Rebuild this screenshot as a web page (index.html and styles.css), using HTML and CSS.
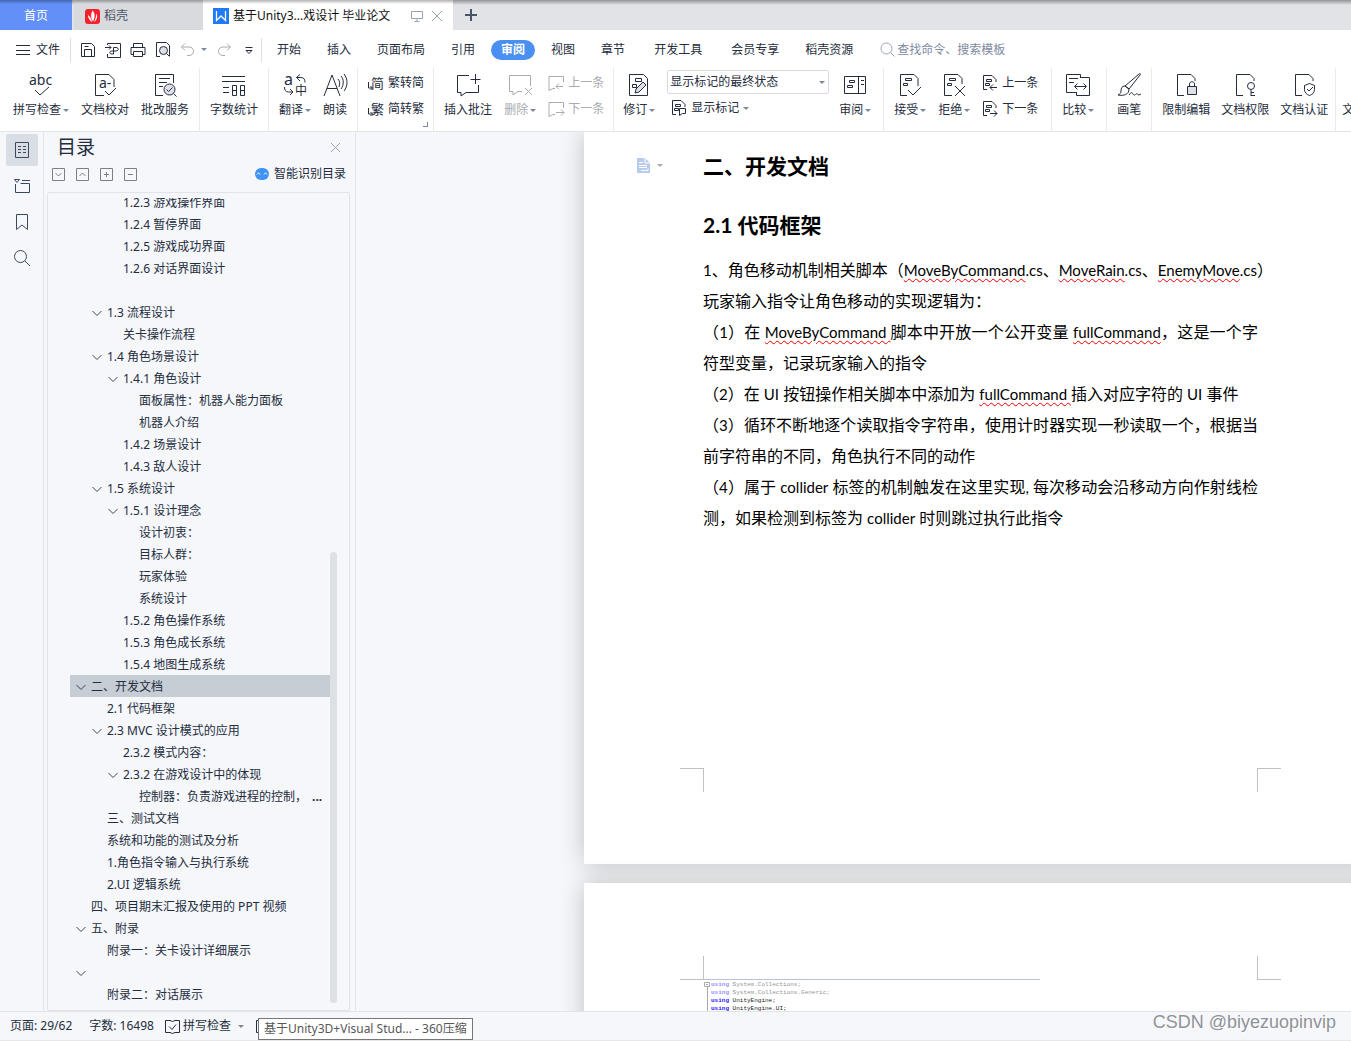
FILE: index.html
```
<!DOCTYPE html>
<html lang="zh-CN">
<head>
<meta charset="utf-8">
<title>基于Unity3D游戏设计 毕业论文</title>
<link rel="stylesheet" href="styles.css">
</head>
<body>
<svg class="symbols" aria-hidden="true">
  <symbol id="chev" viewBox="0 0 10 10"><path d="M.5 3L5 7.500 9.500 3"/></symbol>
  <symbol id="note" viewBox="0 0 16 16"><path d="M7 13.500H5l-4 2V1.500H15.500V7"/></symbol>
  <symbol id="track" viewBox="0 0 16 16"><path d="M5 14.500H1.500V.5H10l4 4V7M4.500 4.500h5v2h-5zM3.500 8.500h4v2h-4z"/></symbol>
  <symbol id="page" viewBox="0 0 24 24"><path d="M10 22.500H3.500V1.500H17l4 4V8"/></symbol>
</svg>

<header>
  <nav class="tabs">
    <button class="tab home">首页</button>
    <button class="tab docer"><svg width="15" height="15" viewBox="0 0 15 15"><rect width="15" height="15" rx="3" fill="#f5222d"/><path d="M7.500 1.500c2.500 2.500 3 6 .5 11C5.500 9 5.500 5 7.500 1.500zM11.500 4.500c1.500 3 .5 6.500-2.500 8.500 1.500-3 2-5.500 2.500-8.500zM3 6c0 3 1.500 5.500 4 7C6.500 9.500 5 7.500 3 6z" fill="#fff"/></svg>稻壳</button>
    <button class="tab current"><svg width="16" height="16" viewBox="0 0 16 16"><rect width="16" height="16" fill="#1f7bf2"/><path d="M3.500 3v9.500L8 8l4.500 4.500V3" fill="none" stroke="#fff" stroke-width="1.300"/></svg><span class="tab-title">基于Unity3...戏设计 毕业论文</span><svg class="ico faint" width="12" height="12" viewBox="0 0 12 12"><path d="M.5 1.500h11v7H.5zM6 8.500v3M3.500 11.500h5"/></svg><svg class="ico faint" width="12" height="12" viewBox="0 0 12 12"><path d="M1 1l10 10M11 1L1 11"/></svg></button>
    <button class="tab add" aria-label="新建"><svg width="12" height="12" viewBox="0 0 12 12"><path d="M6 0v12M0 6h12" stroke="#4a5468" stroke-width="2"/></svg></button>
  </nav>

  <div class="menubar">
    <button class="file"><svg class="ico" width="14" height="12" viewBox="0 0 14 12"><path d="M0 1.500h14M0 6.500h14M0 10.500h14"/></svg>文件</button>
    <div class="quick">
      <button aria-label="保存"><svg class="ico" width="16" height="16" viewBox="0 0 16 16"><path d="M1.500 14.500h13v-10l-3-3h-10zM4.500 14v-6.500h7V14M4.500 4.500h4"/></svg></button>
      <button aria-label="输出PDF"><svg class="ico" width="16" height="16" viewBox="0 0 16 16"><path d="M2.500 3V1.500h13v14h-13V12M0 5.500h6M4 3.500l2 2-2 2M8.500 12V5.500H11c3 0 3 3.500 0 3.500H7c-3 0-3 3 0 3h1.500"/></svg></button>
      <button aria-label="打印"><svg class="ico" width="16" height="16" viewBox="0 0 16 16"><path d="M3.500 5V1.500h9V5M3.500 12.500h-2.500v-7h14v7h-2.500M3.500 9.500h9v5h-9z"/></svg></button>
      <button aria-label="打印预览"><svg class="ico" width="16" height="16" viewBox="0 0 16 16"><path d="M5 14.500H1.500V.5h10l3 3V14"/><circle cx="8.500" cy="8.500" r="4" fill="#dcdfe5"/><path d="M11.500 11.500l3 3"/></svg></button>
      <button class="dim" aria-label="撤销"><svg class="ico" width="16" height="16" viewBox="0 0 16 16"><path d="M5 1.500L1.500 5 5 8.500M1.500 5H9c6 0 6 8.500 0 8.500H7"/></svg><i class="caret"></i></button>
      <button class="dim" aria-label="恢复"><svg class="ico" width="16" height="16" viewBox="0 0 16 16"><path d="M11 1.500L14.500 5 11 8.500M14.500 5H7c-6 0-6 8.500 0 8.500h2"/></svg></button>
      <button aria-label="自定义"><svg class="ico" width="16" height="16" viewBox="0 0 16 16"><path d="M4.500 5.500h7M5 8.500h6l-3 3z"/></svg></button>
    </div>
    <nav class="menus">
      <button>开始</button><button>插入</button><button>页面布局</button><button>引用</button><button class="on">审阅</button><button>视图</button><button>章节</button><button class="wide">开发工具</button><button class="wide">会员专享</button><button>稻壳资源</button>
    </nav>
    <label class="search"><svg class="ico" width="15" height="15" viewBox="0 0 15 15"><circle cx="6.500" cy="6.500" r="5.500"/><path d="M10.500 10.500l4 4"/></svg><input type="text" placeholder="查找命令、搜索模板" aria-label="查找命令"></label>
  </div>

  <div class="ribbon">
    <div class="group first">
      <button class="big"><svg class="ico" width="24" height="24" viewBox="0 0 24 24"><text x="0" y="12" font-size="14">abc</text><path d="M6 17l5 5 9-8"/></svg><span>拼写检查<i class="caret"></i></span></button>
      <button class="big"><svg class="ico" width="24" height="24" viewBox="0 0 24 24"><path d="M11 22.500H2.500V1.500H16l5 5V14M12 18l4 4 7-7"/><text x="6" y="15" font-size="14">a-</text></svg><span>文档校对</span></button>
      <button class="big"><svg class="ico" width="24" height="24" viewBox="0 0 24 24"><path d="M10 22.500H2.500V1.500h18V10M6 5.500h11M6 9.500h8M6 13.500h4"/><circle cx="16.500" cy="16.500" r="5.500" fill="#dde0e6"/><path d="M13.500 16.500l2 2 4-4M20.500 20.500l3 3"/></svg><span>批改服务</span></button>
    </div>
    <div class="group">
      <button class="big"><svg class="ico" width="24" height="24" viewBox="0 0 24 24"><path d="M0 3.500h23M0 8.500h23M1 14.500h6M1 19.500h6M10.500 12.500h4v10h-4zM18.500 12.500h4v10h-4zM10.500 17.500h4M18.500 17.500h4"/></svg><span>字数统计</span></button>
    </div>
    <div class="group">
      <button class="big"><svg class="ico" width="24" height="24" viewBox="0 0 24 24"><text x="1" y="12" font-size="16">a</text><text x="12" y="22" font-size="12">中</text><path d="M17 1.500l-3.500 3L17 8M13.500 4.500H18c3 0 4 2 4 5M1.500 14c0 3 1 5 4 5h4M7 16l3 3-3 3"/></svg><span>翻译<i class="caret"></i></span></button>
      <button class="big"><svg class="ico" width="24" height="24" viewBox="0 0 24 24"><path d="M1 23L9 2l8 21M4 15.500h10M15 6c2 2 2 5 1 8M18 3c3 3 3 9 0 13M21 1c4 5 4 12 0 17"/></svg><span>朗读</span></button>
    </div>
    <div class="group">
      <div class="stack">
        <button class="small"><svg class="ico" width="16" height="16" viewBox="0 0 16 16"><text x="3" y="13" font-size="13">简</text><path d="M.5 7v6h4M2.500 11l2 2-2 2"/></svg>繁转简</button>
        <button class="small"><svg class="ico" width="16" height="16" viewBox="0 0 16 16"><text x="3" y="13" font-size="13">繁</text><path d="M.5 7v6h4M2.500 11l2 2-2 2"/></svg>简转繁</button>
      </div>
      <i class="corner"></i>
    </div>
    <div class="group">
      <button class="big"><svg class="ico" width="24" height="24" viewBox="0 0 24 24"><path d="M13 2.500H1.500v17H5V23l5-3.500h12.500V12M19.500 1v10M14.500 6.500h10"/></svg><span>插入批注</span></button>
      <button class="big dim"><svg class="ico" width="24" height="24" viewBox="0 0 24 24"><path d="M14 18.500h-4L5 22v-3.500H1.500v-16h21V13M17 15l7 7M24 15l-7 7"/></svg><span>删除<i class="caret"></i></span></button>
      <div class="stack">
        <button class="small dim"><svg class="ico" width="16" height="16" viewBox="0 0 16 16"><use href="#note"/><path d="M8 11.500h7M11 8.500l-3 3 3 3"/></svg>上一条</button>
        <button class="small dim"><svg class="ico" width="16" height="16" viewBox="0 0 16 16"><use href="#note"/><path d="M8 11.500h8M13 8.500l3 3-3 3"/></svg>下一条</button>
      </div>
    </div>
    <div class="group marks">
      <button class="big"><svg class="ico" width="24" height="24" viewBox="0 0 24 24"><path d="M2.500 1.500h14l4 4v17h-18zM8.500 5.500h6v3h-6zM5.500 11.500h4v3h-4z"/><path d="M8 20l1-4 7-7 3 3-7 7z" fill="#dde0e6"/></svg><span>修订<i class="caret"></i></span></button>
      <div class="stack show">
        <span class="pick"><select aria-label="显示状态"><option>显示标记的最终状态</option></select><i class="caret"></i></span>
        <button class="small"><svg class="ico" width="16" height="16" viewBox="0 0 16 16"><use href="#track"/><path d="M8.500 8.500h6v5h-3l-3 2z" fill="#fff"/></svg>显示标记<i class="caret"></i></button>
      </div>
      <button class="big"><svg class="ico" width="24" height="24" viewBox="0 0 24 24"><path d="M1.500 3.500h21v17h-21zM15.500 3.500v17M6.500 7.500h5v2h-5zM4.500 12.500h5v2h-5zM18 7.500h3M18 11.500h3"/></svg><span>审阅<i class="caret"></i></span></button>
    </div>
    <div class="group tail">
      <button class="big"><svg class="ico" width="24" height="24" viewBox="0 0 24 24"><path d="M9 22.500H2.500V1.500H16l4 4V13M7.500 5.500h6v2h-6zM5.500 10.500h4v2h-4zM10 17l5 5 8-8"/></svg><span>接受<i class="caret"></i></span></button>
      <button class="big"><svg class="ico" width="24" height="24" viewBox="0 0 24 24"><path d="M10 22.500H2.500V1.500H16l4 4V11M7.500 5.500h6v2h-6zM5.500 10.500h4v2h-4zM13 13l10 10M23 13L13 23"/></svg><span>拒绝<i class="caret"></i></span></button>
      <div class="stack">
        <button class="small"><svg class="ico" width="16" height="16" viewBox="0 0 16 16"><use href="#track"/><path d="M8 12.500h7M11 9.500l-3 3 3 3"/></svg>上一条</button>
        <button class="small"><svg class="ico" width="16" height="16" viewBox="0 0 16 16"><use href="#track"/><path d="M8 12.500h7M12 9.500l3 3-3 3"/></svg>下一条</button>
      </div>
    </div>
    <div class="group compare">
      <button class="big"><svg class="ico" width="24" height="24" viewBox="0 0 24 24"><path d="M10 19.500H.5v-18h14V5M3 5.500h9M3 9.500h5M14 4.500h9.500v18h-13V19M9 13.500h11M11.500 10.500l-3 3 3 3M17.500 10.500l3 3-3 3"/></svg><span>比较<i class="caret"></i></span></button>
    </div>
    <div class="group">
      <button class="big"><svg class="ico" width="24" height="24" viewBox="0 0 24 24"><path d="M8 13L22 1c1-1 2 0 1 1L12 16zM8 13c-3 0-4 2-4 5 0 2-1 3-3 4 5 1 11 0 11-6zM12 22c2-3 3-3 4-1s2 1 3 0 2 1 3 1 1-1 2-1"/></svg><span>画笔</span></button>
    </div>
    <div class="group tight">
      <button class="big"><svg class="ico" width="24" height="24" viewBox="0 0 24 24"><use href="#page"/><path d="M15.500 13v-2c0-3 5-3 5 0v2"/><path d="M13.500 13.500h9v8h-9z" fill="#dde0e6"/></svg><span>限制编辑</span></button>
      <button class="big"><svg class="ico" width="24" height="24" viewBox="0 0 24 24"><use href="#page"/><circle cx="18" cy="13" r="3.500"/><path d="M18 16.500V23M18 19.500h3M18 22.500h4"/></svg><span>文档权限</span></button>
      <button class="big"><svg class="ico" width="24" height="24" viewBox="0 0 24 24"><use href="#page"/><path d="M17.500 10.500l5 2v4c0 3-2 5-5 6-3-1-5-3-5-6v-4zM15 16l2 2 4-4"/></svg><span>文档认证</span></button>
    </div>
    <div class="group last"><button class="big"><svg class="ico" width="24" height="24" viewBox="0 0 24 24"><use href="#page"/></svg><span>文档定稿</span></button></div>
  </div>
</header>

<main>
  <nav class="rail">
    <button class="on" aria-label="目录"><svg class="ico" width="16" height="18" viewBox="0 0 16 18"><path d="M1.500 1.500h13v15h-13zM4 5.500h3M9 5.500h3M4 8.500h3M9 8.500h3M4 11.500h3M9 11.500h3"/></svg></button>
    <button aria-label="章节"><svg class="ico" width="16" height="18" viewBox="0 0 16 18"><path d="M.5 2.500h5l-2.500 3zM8 3.500h8M1.500 7v8.500h14v-9h-9"/></svg></button>
    <button aria-label="书签"><svg class="ico" width="16" height="18" viewBox="0 0 16 18"><path d="M2.500 1.500h11v15L8 12l-5.500 4.500z"/></svg></button>
    <button aria-label="查找"><svg class="ico" width="16" height="18" viewBox="0 0 16 18"><circle cx="6.500" cy="7.500" r="6"/><path d="M11 12l5 5"/></svg></button>
  </nav>

  <aside class="outline">
    <div class="outline-head"><h2>目录</h2><button aria-label="关闭"><svg class="ico faint" width="11" height="11" viewBox="0 0 11 11"><path d="M1 1l9 9M10 1l-9 9"/></svg></button></div>
    <div class="outline-tools">
      <button aria-label="展开"><svg class="ico" width="13" height="13" viewBox="0 0 13 13"><path d="M.5.5h12v12H.5zM3.500 5l3 3 3-3"/></svg></button>
      <button aria-label="收起"><svg class="ico" width="13" height="13" viewBox="0 0 13 13"><path d="M.5.5h12v12H.5zM3.500 8l3-3 3 3"/></svg></button>
      <button aria-label="增加"><svg class="ico" width="13" height="13" viewBox="0 0 13 13"><path d="M.5.5h12v12H.5zM4 6.500h5M6.500 4v5"/></svg></button>
      <button aria-label="减少"><svg class="ico" width="13" height="13" viewBox="0 0 13 13"><path d="M.5.5h12v12H.5zM4 6.500h5"/></svg></button>
      <button class="smart"><svg width="14" height="12" viewBox="0 0 14 12"><rect width="14" height="12" rx="6" fill="#3f93f5"/><path d="M2 6.500c1-2 2-2 3 0M9 6.500c1-2 2-2 3 0" fill="none" stroke="#fff"/></svg>智能识别目录</button>
    </div>
    <div class="toc-box">
      <ul class="toc">
        <li class="l3">1.2.3 游戏操作界面</li>
        <li class="l3">1.2.4 暂停界面</li>
        <li class="l3">1.2.5 游戏成功界面</li>
        <li class="l3">1.2.6 对话界面设计</li>
        <li></li>
        <li class="l2"><svg><use href="#chev"/></svg>1.3 流程设计</li>
        <li class="l3">关卡操作流程</li>
        <li class="l2"><svg><use href="#chev"/></svg>1.4 角色场景设计</li>
        <li class="l3"><svg><use href="#chev"/></svg>1.4.1 角色设计</li>
        <li class="l4">面板属性：机器人能力面板</li>
        <li class="l4">机器人介绍</li>
        <li class="l3">1.4.2 场景设计</li>
        <li class="l3">1.4.3 敌人设计</li>
        <li class="l2"><svg><use href="#chev"/></svg>1.5 系统设计</li>
        <li class="l3"><svg><use href="#chev"/></svg>1.5.1 设计理念</li>
        <li class="l4">设计初衷：</li>
        <li class="l4">目标人群：</li>
        <li class="l4">玩家体验</li>
        <li class="l4">系统设计</li>
        <li class="l3">1.5.2 角色操作系统</li>
        <li class="l3">1.5.3 角色成长系统</li>
        <li class="l3">1.5.4 地图生成系统</li>
        <li class="l1 on"><svg><use href="#chev"/></svg>二、开发文档</li>
        <li class="l2">2.1 代码框架</li>
        <li class="l2"><svg><use href="#chev"/></svg>2.3 MVC 设计模式的应用</li>
        <li class="l3">2.3.2 模式内容：</li>
        <li class="l3"><svg><use href="#chev"/></svg>2.3.2 在游戏设计中的体现</li>
        <li class="l4">控制器：负责游戏进程的控制， <b>...</b></li>
        <li class="l2">三、测试文档</li>
        <li class="l2">系统和功能的测试及分析</li>
        <li class="l2">1.角色指令输入与执行系统</li>
        <li class="l2">2.UI 逻辑系统</li>
        <li class="l1">四、项目期末汇报及使用的 PPT 视频</li>
        <li class="l1"><svg><use href="#chev"/></svg>五、附录</li>
        <li class="l2">附录一：关卡设计详细展示</li>
        <li class="l1"><svg><use href="#chev"/></svg></li>
        <li class="l2">附录二：对话展示</li>
      </ul>
      <div class="track"><div class="thumb"></div></div>
    </div>
  </aside>

  <section class="canvas">
    <article class="sheet">
      <button class="para-mark" aria-label="段落"><svg width="13" height="15" viewBox="0 0 13 15"><path d="M0 0h8l5 5v10H0z" fill="#b7cbea"/><path d="M8 0v5h5M2 4.500h4M2 7.500h8M2 9.500h8M4 12.500h7v-2" fill="none" stroke="#fff"/></svg><i class="caret"></i></button>
      <h1>二、开发文档</h1>
      <h2><span class="en">2.1</span> 代码框架</h2>
      <p><span class="en">1</span>、角色移动机制相关脚本（<span class="en"><u>MoveByCommand</u>.cs</span>、<span class="en"><u>MoveRain</u>.cs</span>、<span class="en"><u>EnemyMove</u>.cs</span>）</p>
      <p>玩家输入指令让角色移动的实现逻辑为：</p>
      <p class="full">（<span class="en">1</span>）在 <span class="en"><u>MoveByCommand </u></span>脚本中开放一个公开变量 <span class="en"><u>fullCommand</u></span>，这是一个字</p>
      <p>符型变量，记录玩家输入的指令</p>
      <p>（<span class="en">2</span>）在 <span class="en">UI</span> 按钮操作相关脚本中添加为 <span class="en"><u>fullCommand </u></span>插入对应字符的 <span class="en">UI</span> 事件</p>
      <p class="full">（<span class="en">3</span>）循环不断地逐个读取指令字符串，使用计时器实现一秒读取一个，根据当</p>
      <p>前字符串的不同，角色执行不同的动作</p>
      <p class="full">（<span class="en">4</span>）属于 <span class="en">collider</span> 标签的机制触发在这里实现<span class="en">, </span>每次移动会沿移动方向作射线检</p>
      <p>测，如果检测到标签为 <span class="en">collider</span> 时则跳过执行此指令</p>
      <div class="crops bottom"><i></i><i></i></div>
    </article>
    <article class="sheet second">
      <div class="crops top"><i></i><i></i></div>
      <div class="code">
        <svg class="ico" width="6" height="40" viewBox="0 0 6 40"><path d="M.5 2.500h5v4h-5zM2 4.500h2M3.500 7v33"/></svg>
        <pre><span class="soft"><b>using</b> System.Collections;
<b>using</b> System.Collections.Generic;</span>
<b>using</b> UnityEngine;
<b>using</b> UnityEngine.UI;</pre>
      </div>
    </article>
  </section>
</main>

<footer>
  <span class="stat">页面: 29/62</span>
  <span class="stat">字数: 16498</span>
  <button class="stat"><svg class="ico" width="15" height="15" viewBox="0 0 15 15"><path d="M5 1.500H.5v12H5M5 13.500l2.500 1 2.500-1h4.500v-12H10M5 1.500l2.500 1 2.500-1M4 7.500l3 3 4-5"/></svg>拼写检查<i class="caret"></i></button>
  <div class="task"><svg class="ico" width="15" height="15" viewBox="0 0 15 15"><path d="M.5 1.500h14v12H.5z"/></svg><div class="tip">基于Unity3D+Visual Stud... - 360压缩</div></div>
  <span class="brand">CSDN @biyezuopinvip</span>
</footer>
</body>
</html>
```
FILE: styles.css
```
* { box-sizing: border-box; }

body {
  margin: 0;
  height: 100vh;
  display: flex;
  flex-direction: column;
  overflow: hidden;
  background: #f5f7fa;
  color: #242c3d;
  font: 12px/18px "Noto Sans", "Noto Sans CJK SC", sans-serif;
}

button {
  display: flex;
  align-items: center;
  margin: 0;
  padding: 0;
  border: 0;
  background: none;
  color: inherit;
  font: inherit;
  white-space: nowrap;
}

svg { flex: none; display: block; }
.symbols { position: absolute; width: 0; height: 0; }
.ico { fill: none; stroke: currentColor; overflow: visible; }
.ico text { fill: currentColor; stroke: none; }
.faint { color: #98a3b8; }
.dim { color: #a9abb0; }

.caret {
  flex: none;
  display: inline-block;
  border: 3px solid transparent;
  border-top-color: #7c879c;
  border-bottom: 0;
}

/* window tabs */
header { flex: none; background: #fff; }
.tabs {
  display: flex;
  height: 30px;
  background: linear-gradient(rgba(0, 0, 0, .35), rgba(0, 0, 0, 0) 5px), #e1e3e7;
}
.tab { gap: 4px; padding-top: 2px; }
.home { width: 72px; justify-content: center; background: linear-gradient(rgba(0, 0, 0, .3), rgba(0, 0, 0, 0) 4px), #628ff8; color: #fff; }
.docer { width: 129px; margin: 0 0 0 2px; padding-left: 11px; background: linear-gradient(rgba(0, 0, 0, .3), rgba(0, 0, 0, 0) 4px), #d9dadd; color: #4d5566; }
.current { width: 250px; padding: 2px 10px 0; background: linear-gradient(rgba(0, 0, 0, .3), rgba(0, 0, 0, 0) 4px), #fff; color: #111; gap: 4px; }
.tab-title { flex: 1; text-align: left; }
.current .faint + .faint { margin-left: 4px; }
.add { padding: 0 12px; }

/* menu row */
.menubar { display: flex; align-items: center; height: 38px; padding-top: 1px; }
.file { gap: 6px; height: 24px; padding: 0 10px 0 16px; border-right: 1px solid #dcdfe5; }
.quick { display: flex; align-items: center; gap: 9px; height: 24px; padding: 0 4px 0 9px; border-right: 1px solid #dcdfe5; }
.quick button { gap: 5px; }
.menus { display: flex; gap: 6px; padding-left: 5px; }
.menus button { height: 20px; padding: 0 10px; border-radius: 10px; }
.menus .wide { margin-left: 3px; }
.menus .on { background: #4a90f2; color: #fff; font-weight: 700; }
.search { display: flex; align-items: center; gap: 2px; margin-left: 17px; color: #97a1b5; }
.search input { width: 160px; padding: 0; border: 0; background: none; color: inherit; font: inherit; }
.search input::placeholder { color: #7e8aa0; opacity: 1; }

/* ribbon */
.ribbon { display: flex; height: 64px; overflow: hidden; border-bottom: 1px solid #e3e5e9; }
.group { flex: none; display: flex; position: relative; padding: 0 4px; border-right: 1px solid #e9ebef; }
.group.first { padding-left: 7px; }
.group.marks { padding: 0 6px 0 3px; }
.group.tail { padding-right: 8px; }
.group.compare { padding-right: 6px; }
.group.tight { padding-right: 1px; }
.group.last { border: 0; padding-left: 0; }
.big { flex-direction: column; height: 52px; margin-top: 4px; padding: 1px 6px 0; gap: 4px; }
.big span { display: flex; align-items: center; gap: 2px; }
.tight .big + .big { margin-left: -1px; }
.stack { display: flex; flex-direction: column; gap: 6px; padding: 5px 5px 0 6px; }
.small { height: 20px; gap: 4px; }
.show { gap: 4px; padding: 2px 4px 0 6px; }
.pick { position: relative; display: flex; align-items: center; }
.pick select { width: 162px; height: 24px; padding: 0 2px; border: 1px solid #d8dbe1; border-radius: 2px; appearance: none; background: #fff; color: inherit; font: inherit; }
.pick .caret { position: absolute; right: 4px; }
.show .small { padding-left: 4px; gap: 4px; }
.corner { position: absolute; right: 5px; bottom: 4px; width: 5px; height: 5px; border: solid #7c879c; border-width: 0 1px 1px 0; }

/* work area */
main { flex: 1; min-height: 0; display: flex; }
.rail { flex: none; display: flex; flex-direction: column; gap: 4px; width: 44px; padding: 2px 5px 0 6px; border-right: 1px solid #e1e4ea; color: #3c4860; }
.rail button { justify-content: center; height: 32px; border-radius: 2px; }
.rail .on { background: #d9dde4; }

.outline { flex: none; display: flex; flex-direction: column; width: 312px; padding: 0 5px 0 3px; border-right: 1px solid #e1e4ea; }
.outline-head { display: flex; align-items: center; justify-content: space-between; height: 30px; padding: 0 9px 0 10px; }
.outline-head h2 { margin: 0; font-size: 19px; font-weight: 400; }
.outline-tools { display: flex; align-items: center; gap: 11px; height: 24px; padding: 0 4px 0 5px; color: #7a7f88; }
.smart { margin-left: auto; gap: 5px; color: #242c3d; }
.toc-box { flex: 1; min-height: 0; display: flex; margin-top: 6px; padding: 5px 12px 0 22px; border: 1px solid #e1e4ea; border-radius: 2px; }
.toc { flex: 1; min-width: 0; overflow: hidden; margin: 0; padding: 0; list-style: none; }
.toc li { display: flex; align-items: center; gap: 5px; height: 22px; padding-top: 2px; white-space: nowrap; }
.toc li:first-child { margin-top: -7px; }
.toc svg { width: 10px; height: 10px; margin-left: -15px; fill: none; stroke: #3c4454; stroke-width: 1px; }
.toc .l1 { padding-left: 21px; }
.toc .l2 { padding-left: 37px; }
.toc .l3 { padding-left: 53px; }
.toc .l4 { padding-left: 69px; }
.toc .on { background: #c6cdd5; }
.track { flex: none; display: flex; flex-direction: column; justify-content: flex-end; width: 7px; padding-bottom: 7px; }
.thumb { height: 56%; border-radius: 4px; background: #dde0e4; }

/* document */
.canvas { flex: 1; min-width: 0; overflow: hidden; padding-left: 228px; }
.sheet { position: relative; width: 793px; height: 732px; padding: 18px 119px 0; background: #fff; box-shadow: 0 0 24px rgba(0, 0, 0, .22); color: #000; font: 16px/31px Lato, "Noto Sans CJK SC", sans-serif; }
.sheet h1 { margin: 0 0 27px; font-size: 21px; line-height: 32px; }
.sheet h2 { margin: 0 0 13px; font-size: 21px; line-height: 32px; }
.sheet p { height: 31px; margin: 0; white-space: nowrap; }
.sheet .full { text-align: justify; text-align-last: justify; }
.sheet p .en { font-size: 15px; line-height: 20px; }
.sheet u { text-decoration: underline wavy #f00000 1px; text-underline-offset: 2px; }
.para-mark { position: absolute; left: 53px; top: 26px; gap: 7px; }
.para-mark .caret { border-top-color: #aaa; }
.crops { display: flex; justify-content: space-between; margin: 0 -23px; }
.crops i { width: 24px; height: 24px; border: 0 solid #bfc1c4; }
.bottom { margin-top: 235px; }
.bottom i { border-top-width: 1px; }
.top i { border-bottom-width: 1px; }
.crops i:first-child { border-right-width: 1px; }
.crops i:last-child { border-left-width: 1px; }
.second { margin-top: 19px; padding-top: 73px; }
.code { display: flex; gap: 1px; width: 337px; margin-top: -1px; padding-left: 1px; border-top: 1px solid #b9c3dd; color: #aaa; }
.code pre { margin: 0; padding-top: 1px; color: #222; font: 6px/8px "Liberation Mono", monospace; }
.code b { color: #2a20ff; }
.soft { opacity: .5; }

/* status bar */
footer { flex: none; display: flex; align-items: center; height: 30px; padding-left: 5px; border-top: 1px solid #e1e4ea; border-bottom: 1px solid #e4e9eb; }
.stat { display: flex; align-items: center; gap: 3px; padding: 0 5px; }
.stat + .stat { padding-left: 12px; }
button.stat.stat { padding-left: 6px; }
.stat .caret { margin: 0 0 0 4px; }
.task { position: relative; margin-left: 7px; }
.tip { position: absolute; left: 2px; top: -1px; padding: 1px 5px; border: 1px solid #767676; background: #fff; color: #575757; white-space: nowrap; }
.brand { margin-left: auto; padding-right: 15px; color: #8f9297; font: 18px/20px "Liberation Sans", Arial, sans-serif; text-shadow: 1px 1px 0 #fff; padding-bottom: 8px; }
```
